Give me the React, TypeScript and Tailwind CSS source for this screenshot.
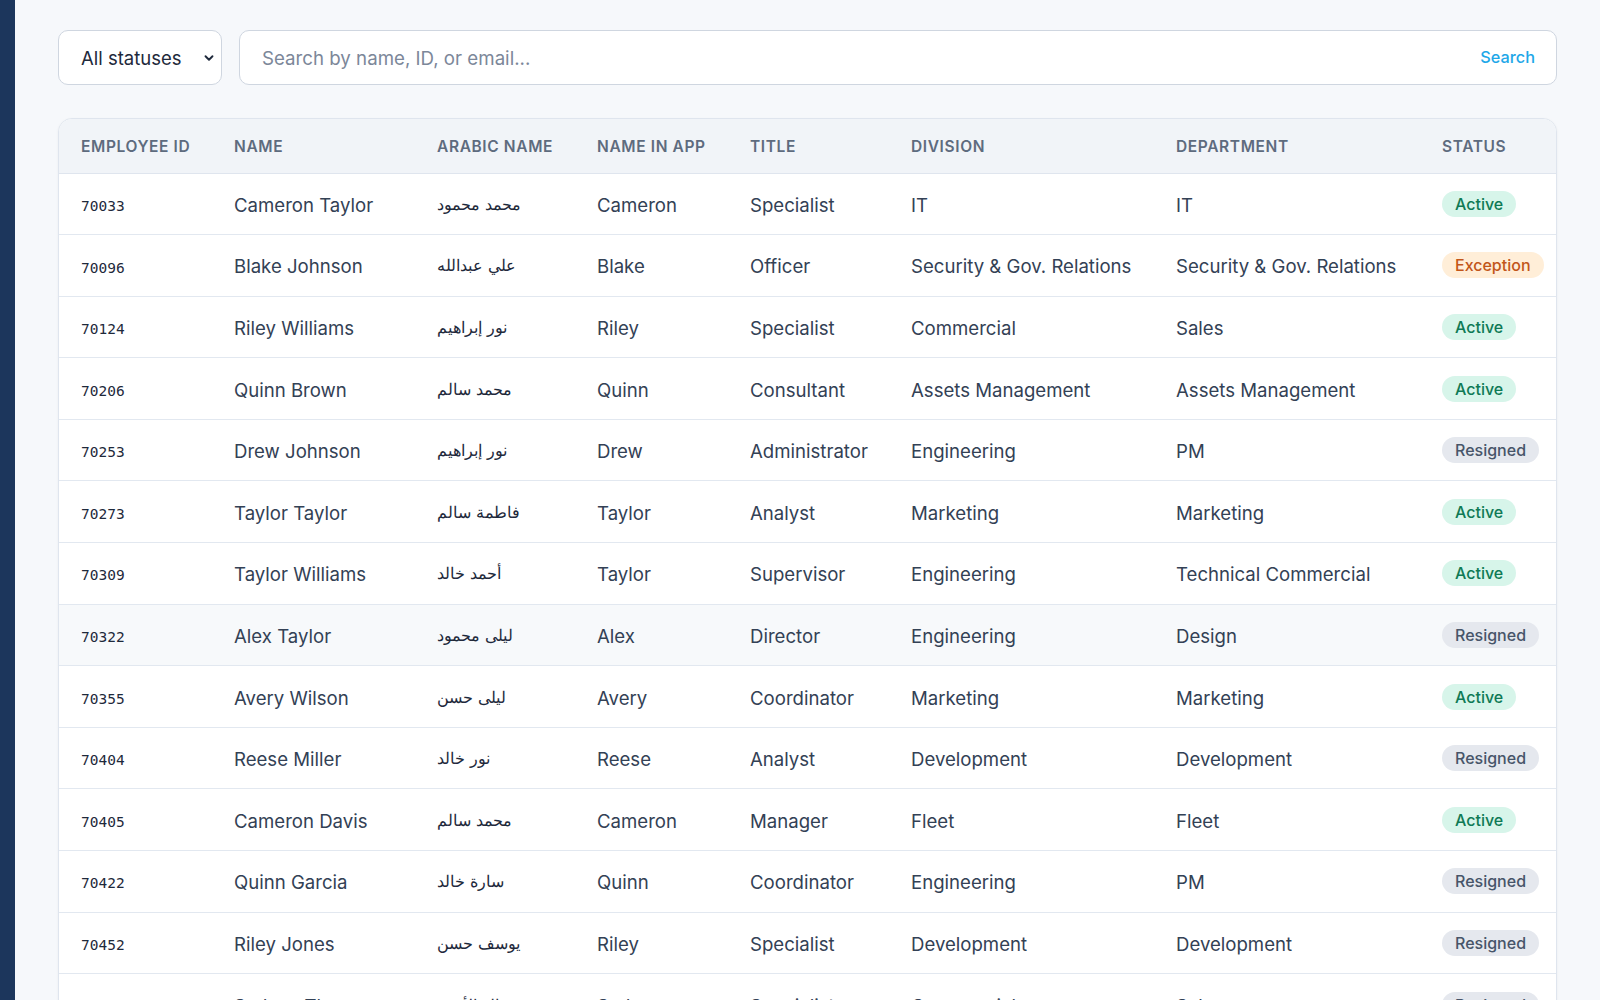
import React from "react";
import { ChevronDown } from "lucide-react";

type Status = "Active" | "Exception" | "Resigned";

type Employee = {
  id: string;
  name: string;
  arabic: string;
  appName: string;
  title: string;
  division: string;
  department: string;
  status: Status;
};

const employees: Employee[] = [
  { id: "70033", name: "Cameron Taylor", arabic: "محمد محمود", appName: "Cameron", title: "Specialist", division: "IT", department: "IT", status: "Active" },
  { id: "70096", name: "Blake Johnson", arabic: "علي عبدالله", appName: "Blake", title: "Officer", division: "Security & Gov. Relations", department: "Security & Gov. Relations", status: "Exception" },
  { id: "70124", name: "Riley Williams", arabic: "نور إبراهيم", appName: "Riley", title: "Specialist", division: "Commercial", department: "Sales", status: "Active" },
  { id: "70206", name: "Quinn Brown", arabic: "محمد سالم", appName: "Quinn", title: "Consultant", division: "Assets Management", department: "Assets Management", status: "Active" },
  { id: "70253", name: "Drew Johnson", arabic: "نور إبراهيم", appName: "Drew", title: "Administrator", division: "Engineering", department: "PM", status: "Resigned" },
  { id: "70273", name: "Taylor Taylor", arabic: "فاطمة سالم", appName: "Taylor", title: "Analyst", division: "Marketing", department: "Marketing", status: "Active" },
  { id: "70309", name: "Taylor Williams", arabic: "أحمد خالد", appName: "Taylor", title: "Supervisor", division: "Engineering", department: "Technical Commercial", status: "Active" },
  { id: "70322", name: "Alex Taylor", arabic: "ليلى محمود", appName: "Alex", title: "Director", division: "Engineering", department: "Design", status: "Resigned" },
  { id: "70355", name: "Avery Wilson", arabic: "ليلى حسن", appName: "Avery", title: "Coordinator", division: "Marketing", department: "Marketing", status: "Active" },
  { id: "70404", name: "Reese Miller", arabic: "نور خالد", appName: "Reese", title: "Analyst", division: "Development", department: "Development", status: "Resigned" },
  { id: "70405", name: "Cameron Davis", arabic: "محمد سالم", appName: "Cameron", title: "Manager", division: "Fleet", department: "Fleet", status: "Active" },
  { id: "70422", name: "Quinn Garcia", arabic: "سارة خالد", appName: "Quinn", title: "Coordinator", division: "Engineering", department: "PM", status: "Resigned" },
  { id: "70452", name: "Riley Jones", arabic: "يوسف حسن", appName: "Riley", title: "Specialist", division: "Development", department: "Development", status: "Resigned" },
  { id: "70488", name: "Sydney Thomas", arabic: "خالد الأحمد", appName: "Sydney", title: "Specialist", division: "Commercial", department: "Sales", status: "Resigned" },
  { id: "70517", name: "Jordan Moore", arabic: "سارة محمود", appName: "Jordan", title: "Analyst", division: "Marketing", department: "Marketing", status: "Active" },
];

// the row under the mouse in the screenshot
const hoveredId = "70322";

const badgeStyles: Record<Status, string> = {
  Active: "bg-[#d7f5ea] text-[#0f7a55]",
  Exception: "bg-[#ffeed8] text-[#c2561a]",
  Resigned: "bg-[#e5e8ee] text-[#475569]",
};

const columns = [
  { label: "Employee ID", width: "w-[153px]" },
  { label: "Name", width: "w-[203px]" },
  { label: "Arabic Name", width: "w-[160px]" },
  { label: "Name in App", width: "w-[153px]" },
  { label: "Title", width: "w-[161px]" },
  { label: "Division", width: "w-[265px]" },
  { label: "Department", width: "w-[266px]" },
  { label: "Status", width: "" },
];

function StatusBadge({ status }: { status: Status }) {
  return (
    <span
      className={`inline-flex h-[26px] items-center whitespace-nowrap rounded-full px-[13px] text-[16px] font-medium ${badgeStyles[status]}`}
    >
      {status}
    </span>
  );
}

export default function App() {
  const textCell = "pl-[22px] pt-[4px] text-[18.6px] whitespace-nowrap";

  return (
    <div className="flex min-h-screen bg-[#f6f8fb] font-['Inter','Noto_Sans',sans-serif] text-[#334155]">
      <div className="w-[15px] shrink-0 bg-[#1c365c]" />

      <main className="flex-1 px-[43px] pt-[30px] pb-10">
        {/* Filters */}
        <div className="flex gap-[17px]">
          <div className="relative w-[164px]">
            <select
              defaultValue="all"
              className="h-[55px] w-full appearance-none rounded-[10px] border border-[#cfd6e0] bg-white pl-[22px] pr-[30px] pt-[2px] text-[18.5px] text-[#1e293b] outline-none"
            >
              <option value="all">All statuses</option>
              <option value="active">Active</option>
              <option value="exception">Exception</option>
              <option value="resigned">Resigned</option>
            </select>
            <ChevronDown
              className="pointer-events-none absolute right-[6px] top-[21px] h-[14px] w-[14px] text-[#1e293b]"
              strokeWidth={3.2}
            />
          </div>

          <div className="flex h-[55px] flex-1 items-center rounded-[10px] border border-[#cfd6e0] bg-white pl-[22px] pr-[21px]">
            <input
              type="text"
              placeholder="Search by name, ID, or email..."
              className="flex-1 bg-transparent pt-[3px] text-[18.7px] text-[#1e293b] outline-none placeholder:text-[#7c8799]"
            />
            <button className="text-[16.3px] font-medium text-[#1ea7e8]">Search</button>
          </div>
        </div>

        {/* Table */}
        <div className="mt-[33px] overflow-hidden rounded-[14px] border border-[#dfe5ee] bg-white shadow-[0_1px_3px_rgba(15,23,42,0.05)]">
          <table className="w-full table-fixed border-collapse text-left">
            <colgroup>
              {columns.map((col) => (
                <col key={col.label} className={col.width} />
              ))}
            </colgroup>
            <thead className="bg-[#f1f4f8]">
              <tr className="border-b border-[#dfe5ee]">
                {columns.map((col) => (
                  <th
                    key={col.label}
                    className="h-[54px] whitespace-nowrap pl-[22px] pt-[2px] text-[15.5px] font-semibold uppercase tracking-[0.04em] text-[#5e6b7e]"
                  >
                    {col.label}
                  </th>
                ))}
              </tr>
            </thead>
            <tbody>
              {employees.map((emp) => (
                <tr
                  key={emp.id}
                  className={`border-b border-[#e2e8f0] ${emp.id === hoveredId ? "bg-[#f7f9fb]" : ""}`}
                >
                  <td className="h-[61.6px] pl-[22px] pt-[6px] font-['DejaVu_Sans_Mono',monospace] text-[14.5px] text-[#1e293b]">
                    {emp.id}
                  </td>
                  <td className={textCell}>{emp.name}</td>
                  <td className="pl-[22px] text-[16px] text-[#1e293b]">
                    <span dir="rtl">{emp.arabic}</span>
                  </td>
                  <td className={textCell}>{emp.appName}</td>
                  <td className={textCell}>{emp.title}</td>
                  <td className={textCell}>{emp.division}</td>
                  <td className={textCell}>{emp.department}</td>
                  <td className="pl-[22px] pr-2">
                    <StatusBadge status={emp.status} />
                  </td>
                </tr>
              ))}
            </tbody>
          </table>
        </div>
      </main>
    </div>
  );
}
